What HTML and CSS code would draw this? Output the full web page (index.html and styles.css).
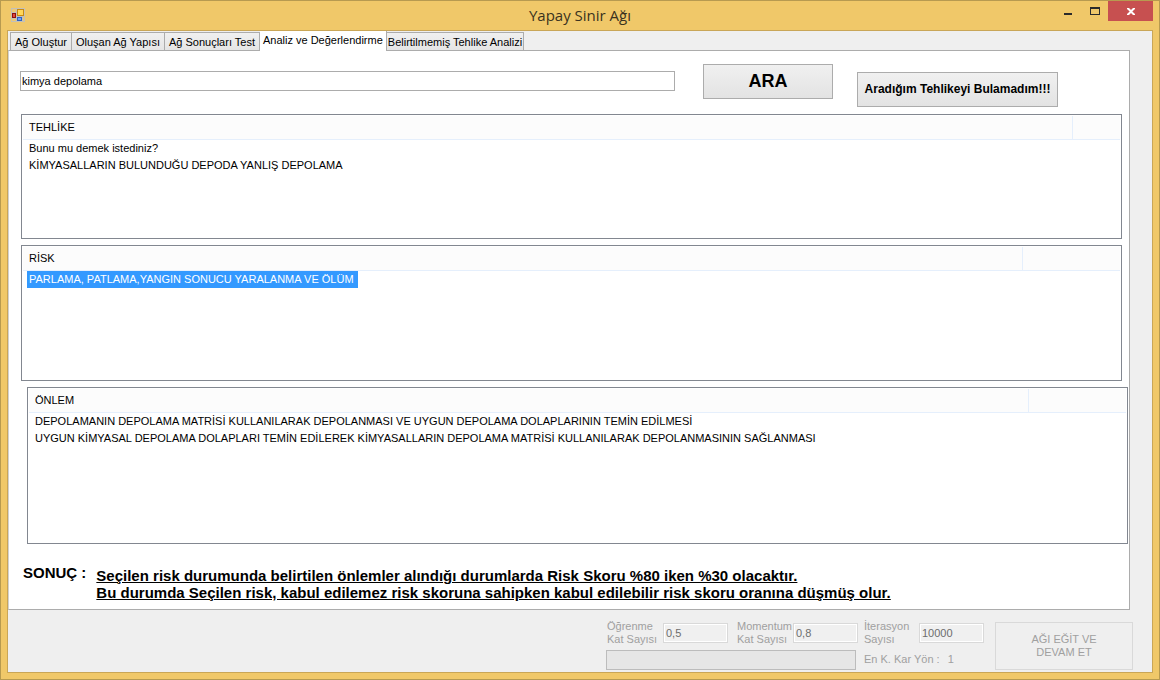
FILE: index.html
```html
<!DOCTYPE html>
<html lang="tr">
<head>
<meta charset="utf-8">
<title>Yapay Sinir Ağı</title>
<link rel="stylesheet" href="styles.css">
</head>
<body>
<div class="window">
  <header class="titlebar">
    <svg class="app-icon" width="14" height="14" viewBox="0 0 14 14" aria-hidden="true">
      <rect width="14" height="14" fill="#c3c0b8"/>
      <rect x="1" y="1" width="4" height="3" fill="#ecc873"/>
      <rect x="1" y="11" width="4" height="2" fill="#ecc873"/>
      <rect x="12" y="9" width="1" height="4" fill="#ecc873"/>
      <rect x="6" y="1" width="7" height="7" fill="#c98a10"/>
      <rect x="7" y="2" width="5" height="5" fill="#ffd75a"/>
      <rect x="1" y="5" width="4" height="5" fill="#8c1010"/>
      <rect x="2" y="6" width="2" height="3" fill="#e04a3c"/>
      <rect x="6" y="9" width="5" height="4" fill="#2f62c4"/>
      <rect x="7" y="10" width="3" height="2" fill="#6ea4f4"/>
    </svg>
    <h1 class="title">Yapay Sinir Ağı</h1>
    <div class="window-controls">
      <button class="control" type="button" aria-label="Küçült">
        <svg width="8" height="8" viewBox="0 0 8 8"><path d="M0 6h8v2H0z" fill="#2b2b2b"/></svg>
      </button>
      <button class="control" type="button" aria-label="Büyüt">
        <svg width="10" height="8" viewBox="0 0 10 8"><path d="M0 0h10v8H0zM1 2v5h8V2z" fill="#2b2b2b" fill-rule="evenodd"/></svg>
      </button>
      <button class="control close" type="button" aria-label="Kapat">
        <svg width="8" height="8" viewBox="0 0 8 8"><path d="M0 1h2l2 2 2-2h2v1L5.300 4.500 8 7v1H6L4 6 2 8H0V7l2.700-2.500L0 2z" fill="#fff"/></svg>
      </button>
    </div>
  </header>

  <main class="client">
    <nav class="tabs" role="tablist">
      <button class="tab" type="button" role="tab">Ağ Oluştur</button>
      <button class="tab" type="button" role="tab">Oluşan Ağ Yapısı</button>
      <button class="tab" type="button" role="tab">Ağ Sonuçları Test</button>
      <button class="tab active" type="button" role="tab" aria-selected="true">Analiz ve Değerlendirme</button>
      <button class="tab" type="button" role="tab">Belirtilmemiş Tehlike Analizi</button>
    </nav>

    <section class="panel">
      <div class="search">
        <input class="search-box" type="text" value="kimya depolama" aria-label="Tehlike ara">
        <button class="button search-button" type="button">ARA</button>
        <button class="button missing-button" type="button">Aradığım Tehlikeyi Bulamadım!!!</button>
      </div>

      <div class="list hazard">
        <table>
          <thead><tr><th scope="col">TEHLİKE</th><td class="spare"></td></tr></thead>
          <tbody>
            <tr><td colspan="2"><span class="item">Bunu mu demek istediniz?</span></td></tr>
            <tr><td colspan="2"><span class="item">KİMYASALLARIN BULUNDUĞU DEPODA YANLIŞ DEPOLAMA</span></td></tr>
          </tbody>
        </table>
      </div>

      <div class="list risk">
        <table>
          <thead><tr><th scope="col">RİSK</th><td class="spare"></td></tr></thead>
          <tbody>
            <tr><td colspan="2"><span class="item selected">PARLAMA, PATLAMA,YANGIN SONUCU YARALANMA VE ÖLÜM</span></td></tr>
          </tbody>
        </table>
      </div>

      <div class="list measure">
        <table>
          <thead><tr><th scope="col">ÖNLEM</th><td class="spare"></td></tr></thead>
          <tbody>
            <tr><td colspan="2"><span class="item">DEPOLAMANIN DEPOLAMA MATRİSİ KULLANILARAK DEPOLANMASI VE UYGUN DEPOLAMA DOLAPLARININ TEMİN EDİLMESİ</span></td></tr>
            <tr><td colspan="2"><span class="item">UYGUN KİMYASAL DEPOLAMA DOLAPLARI TEMİN EDİLEREK KİMYASALLARIN DEPOLAMA MATRİSİ KULLANILARAK DEPOLANMASININ SAĞLANMASI</span></td></tr>
          </tbody>
        </table>
      </div>

      <div class="result">
        <h2 class="result-label">SONUÇ :</h2>
        <p class="result-text">Seçilen risk durumunda belirtilen önlemler alındığı durumlarda Risk Skoru %80 iken %30 olacaktır.<br>Bu durumda Seçilen risk, kabul edilemez risk skoruna sahipken kabul edilebilir risk skoru oranına düşmüş olur.</p>
      </div>
    </section>

    <footer class="training">
      <div class="training-main">
        <div class="fields">
          <div class="field">
            <label for="rate">Öğrenme<br>Kat Sayısı</label>
            <input id="rate" type="text" value="0,5" disabled>
          </div>
          <div class="field">
            <label for="momentum">Momentum<br>Kat Sayısı</label>
            <input id="momentum" type="text" value="0,8" disabled>
          </div>
        </div>
        <progress class="progress" value="0" max="100" aria-label="İlerleme"></progress>
      </div>
      <div class="training-side">
        <div class="field">
          <label for="iterations">İterasyon<br>Sayısı</label>
          <input id="iterations" type="text" value="10000" disabled>
        </div>
        <p class="direction"><span>En K. Kar Yön :</span><span>1</span></p>
      </div>
      <button class="train-button" type="button" disabled>AĞI EĞİT VE<br>DEVAM ET</button>
    </footer>
  </main>
</div>
</body>
</html>
```

FILE: styles.css
```css
* { box-sizing: border-box; }

body {
  margin: 0;
  font: 11px/17px "Liberation Sans", sans-serif;
  color: #000;
}

button, input { font: inherit; color: inherit; }
p, h1, h2 { margin: 0; }

.window {
  display: flex;
  flex-direction: column;
  min-height: 100vh;
  padding: 0 6px 6px;
  border: 1px solid #b79a50;
  background: #f0c869;
}

.titlebar {
  display: grid;
  grid-template-columns: 1fr auto 1fr;
  height: 29px;
}

.app-icon { margin: 7px 0 0 4px; }

.title {
  font: 15px/29px "Open Sans", sans-serif;
  color: #3a3220;
}

.window-controls {
  display: flex;
  justify-content: flex-end;
  align-items: flex-start;
}

.control {
  display: flex;
  align-items: center;
  justify-content: center;
  width: 27px;
  height: 20px;
  padding: 0;
  border: 0;
  background: none;
}

.close {
  width: 45px;
  background: #c75050;
}

.client {
  flex: 1;
  display: flex;
  flex-direction: column;
  border: 1px solid #c9a657;
  background: #efefef;
}

.tabs {
  display: flex;
  align-items: flex-end;
  height: 19px;
  padding-left: 2px;
}

.tab {
  height: 18px;
  padding: 0 4px;
  border: 1px solid #acacac;
  border-left-width: 0;
  border-bottom: 0;
  background: linear-gradient(#f0f0f0, #e5e5e5);
  line-height: 18px;
  white-space: nowrap;
}

.tab:first-child { border-left-width: 1px; }
.tab:last-child { padding: 0 1px; }

.tab.active {
  position: relative;
  height: 20px;
  margin-bottom: -1px;
  padding: 0 3px 2px;
  border-top: 0;
  background: #fff;
}

.panel {
  flex: 1;
  display: flex;
  flex-direction: column;
  gap: 6px;
  margin-right: 22px;
  padding: 13px 6px 8px 12px;
  border: 1px solid #acacac;
  border-left-color: #d0d0d0;
  background: #fff;
}

.search {
  display: flex;
  align-items: flex-start;
  padding-right: 65px;
  padding-bottom: 1px;
  margin-left: -1px;
}

.search-box {
  flex: 1;
  height: 20px;
  margin: 7px 28px 0 0;
  padding: 0 1px;
  border: 1px solid #acacac;
  background: #fff;
}

.button {
  height: 35px;
  padding: 0;
  border: 1px solid #acacac;
  background: linear-gradient(#f0f0f0, #e3e3e3);
  font-weight: bold;
}

.search-button {
  width: 130px;
  font-size: 18px;
}

.missing-button {
  width: 201px;
  margin: 8px 0 0 24px;
  font-size: 12px;
}

.list {
  padding: 1px;
  border: 1px solid #828790;
  background: #fff;
}

.hazard { flex: 1 0 125px; margin-right: 1px; }
.risk { flex: 1 0 136px; margin-right: 1px; }
.measure { flex: 1 0 157px; margin: 0 -5px 0 6px; }

.list table {
  width: 100%;
  border-collapse: separate;
  border-spacing: 0;
}

.list th, .list .spare {
  height: 24px;
  padding: 0 6px;
  border-bottom: 1px solid #e5effc;
  background: #fcfcfc;
  font-weight: normal;
  text-align: left;
}

.list .spare {
  width: 98px;
  border-left: 1px solid #e5effc;
}

.hazard .spare { width: 48px; }

.list td { padding: 0 4px; }

.item {
  display: inline-block;
  padding: 0 2px;
  vertical-align: top;
}

.item.selected {
  padding-right: 4px;
  background: #3399ff;
  color: #fff;
}

.result {
  display: flex;
  gap: 10px;
  padding: 14px 0 0 2px;
  font-weight: bold;
  font-size: 15px;
}

.result-label { font: inherit; white-space: nowrap; }

.result-text {
  padding-top: 3px;
  text-decoration: underline;
}

.training {
  display: flex;
  justify-content: flex-end;
  gap: 8px;
  padding: 10px 19px 2px;
  color: #a0a0a0;
  line-height: 13px;
}

.training-main {
  display: flex;
  flex-direction: column;
  justify-content: space-between;
  width: 250px;
}

.fields, .field { display: flex; }

.fields {
  gap: 9px;
  margin-left: 1px;
}

.field {
  justify-content: space-between;
  white-space: nowrap;
}

.fields .field { flex: 0 0 121px; }

.field input {
  width: 65px;
  height: 20px;
  margin-top: 3px;
  padding: 0 2px;
  border: 1px solid #d9d9d9;
  outline: 1px solid #fff;
  outline-offset: -2px;
  background: #f0f0f0;
  color: #6d6d6d;
}

.progress {
  appearance: none;
  width: 100%;
  height: 20px;
  border: 1px solid #bcbcbc;
  background: #e6e6e6;
}

.progress::-webkit-progress-bar { background: #e6e6e6; }

.training-side {
  display: flex;
  flex-direction: column;
  justify-content: space-between;
  width: 120px;
}

.direction {
  display: flex;
  gap: 8px;
  padding-bottom: 4px;
}

.train-button {
  width: 138px;
  height: 48px;
  margin: 2px 0 0 3px;
  padding: 0;
  border: 1px solid #d9d9d9;
  background: #efefef;
  color: #a0a0a0;
}
```
